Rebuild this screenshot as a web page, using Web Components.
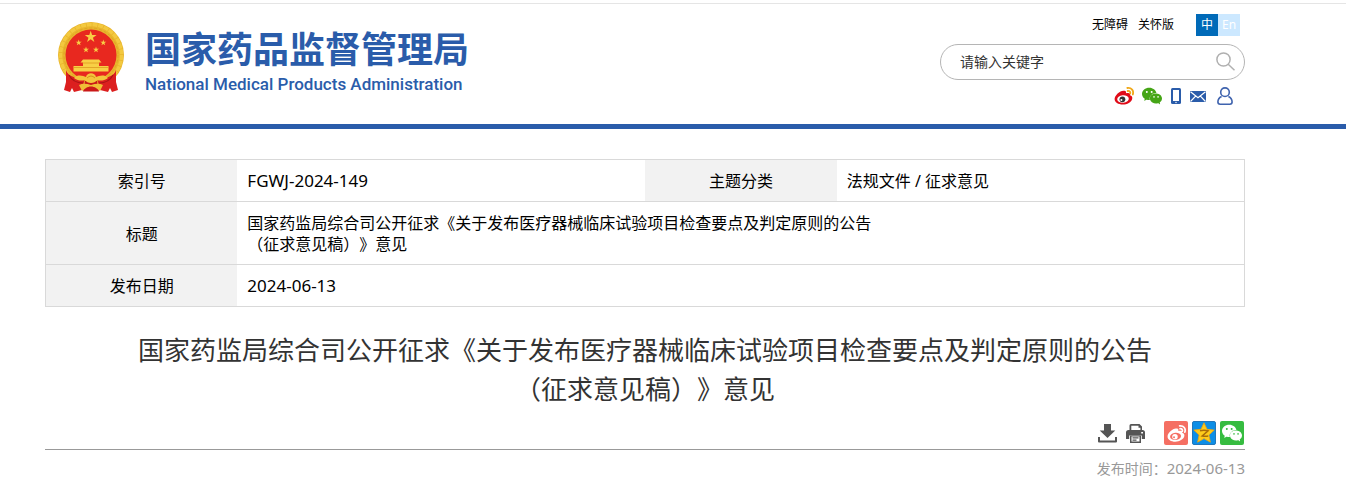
<!DOCTYPE html>
<html lang="zh-CN">
<head>
<meta charset="utf-8">
<meta name="viewport" content="width=device-width, initial-scale=1">
<title>国家药品监督管理局</title>
<style>
  body {
    margin: 0;
    background: #fff;
    color: #000;
    font-family: "Noto Sans", "Noto Sans CJK SC", sans-serif;
    text-spacing-trim: space-all;
    --brand: #2a5caa;
    --edge-start: 45px;
    --edge-end: 101px;
  }
  main { display: block; padding: 30px var(--edge-end) 20px var(--edge-start); }
  .num { font-size: 15px; }
</style>
</head>
<body>
<site-header>
  <site-logo slot="logo"></site-logo>
  <header-tools slot="tools"></header-tools>
</site-header>
<main>
  <doc-meta></doc-meta>
  <article-head>
    <span slot="title">国家药监局综合司公开征求《关于发布医疗器械临床试验项目检查要点及判定原则的公告<br>（征求意见稿）》意见</span>
    <share-bar slot="actions"></share-bar>
    <span slot="date">发布时间：<span class="num">2024-06-13</span></span>
  </article-head>
</main>

<script>
const ICONS = {
  wechat: `<path d="M8.691 2.188C3.891 2.188 0 5.476 0 9.53c0 2.212 1.17 4.203 3.002 5.55a.59.59 0 0 1 .213.665l-.39 1.48c-.019.07-.048.141-.048.213 0 .163.13.295.29.295a.326.326 0 0 0 .167-.054l1.903-1.114a.864.864 0 0 1 .717-.098 10.16 10.16 0 0 0 2.837.403c.276 0 .543-.027.811-.05-.857-2.578.157-4.972 1.932-6.446 1.703-1.415 3.882-1.98 5.853-1.838-.576-3.583-4.196-6.348-8.596-6.348zM5.785 5.991c.642 0 1.162.529 1.162 1.18a1.17 1.17 0 0 1-1.162 1.178A1.17 1.17 0 0 1 4.623 7.17c0-.651.52-1.18 1.162-1.18zm5.813 0c.642 0 1.162.529 1.162 1.18a1.17 1.17 0 0 1-1.162 1.178 1.17 1.17 0 0 1-1.162-1.178c0-.651.52-1.18 1.162-1.18zm5.34 2.867c-1.797-.052-3.746.512-5.28 1.786-1.72 1.428-2.687 3.72-1.78 6.22.942 2.453 3.666 4.229 6.884 4.229.826 0 1.622-.12 2.361-.336a.722.722 0 0 1 .598.082l1.584.926a.272.272 0 0 0 .14.047c.134 0 .24-.111.24-.247 0-.06-.023-.12-.038-.177l-.327-1.233a.582.582 0 0 1-.023-.156.49.49 0 0 1 .201-.398C23.024 18.48 24 16.82 24 14.98c0-3.21-2.931-5.837-6.656-6.088V8.89c-.135-.01-.27-.027-.407-.03zm-2.53 3.274c.535 0 .969.44.969.982a.976.976 0 0 1-.969.983.976.976 0 0 1-.969-.983c0-.542.434-.982.97-.982zm4.844 0c.535 0 .969.44.969.982a.976.976 0 0 1-.969.983.976.976 0 0 1-.969-.983c0-.542.434-.982.969-.982z"/>`,
  weibo: (body, eye, pupil, wave) => `
    <path fill="${body}" d="M9.600 4.800C11.400 4.200 12.500 5.200 11.900 7.300C14.600 6.600 16.800 7 16 9.300C17.700 9.800 18.700 11 18.200 13C17.300 16.400 13.200 18.600 8.800 18.600C4.200 18.600 .6 16.400 .6 13.100C.6 9.600 6 4.600 9.600 4.800Z"/>
    <ellipse cx="9" cy="13" rx="5.800" ry="3.800" fill="${eye}" transform="rotate(-6 9 13)"/>
    <circle cx="8.400" cy="13.300" r="2.900" fill="${pupil}"/>
    <circle cx="7.400" cy="13.900" r="1" fill="${eye}"/>
    <g fill="none" stroke="${wave}" stroke-width="1.800" stroke-linecap="round">
      <path d="M13.300 2C17.600 1.500 20 4.800 18.800 8.500"/>
      <path d="M13.700 5C15.700 4.700 16.700 6 16.200 7.500"/>
    </g>`,
  phone: `<rect x="1" y="0" width="10" height="16" rx="1.500" fill="#2a5caa"/><rect x="3" y="2" width="6" height="11" fill="#fff"/><circle cx="6" cy="14.500" r=".7" fill="#fff"/>`,
  mail: `<rect width="16" height="11" fill="#2a5caa"/><path d="M.5 .8 8 6.800 15.500 .8M.5 10.500 5.600 5.200M15.500 10.500 10.400 5.200" fill="none" stroke="#fff" stroke-width="1.200"/>`,
  user: `<g fill="none" stroke="#3f63ae" stroke-width="1.600"><circle cx="8" cy="5.200" r="4.300"/><path d="M4.600 9.500C2.300 10.500 .9 12.600 .9 15c0 1.700.8 2.200 2.300 2.200h9.600c1.500 0 2.300-.5 2.300-2.200 0-2.400-1.400-4.500-3.700-5.500"/></g>`,
  search: `<g fill="none" stroke="#b0b0b0" stroke-width="1.500"><circle cx="7.500" cy="7.500" r="6.600"/><path d="m12.200 12.200 6.300 6"/></g>`,
  download: `<path fill="#555" d="M6 0h7v6.500h4.300L9.500 14 1.700 6.500H6z"/><path fill="none" stroke="#555" stroke-width="2" stroke-linejoin="round" d="M1 13v4.500h17V13"/>`,
  print: `<path fill="#555" d="M3.500 6V1.500Q3.500 0 5 0h8.500L16 2.500V6h.5Q19 6 19 8.500V15h-3.200v-3.500H3.200V15H0V8.500Q0 6 2.500 6z"/><path fill="#fff" d="M5.300 1.800h7.200v1.900h1.900V6H5.300zM15.200 8h1.800v1.600h-1.800z"/><path fill="#555" d="M4 11.500h11V19H4z"/><path fill="#fff" d="M5.500 12.500h8v5h-8z"/><path fill="#555" d="M6.500 13.200h6v1.200h-6zM6.500 15.500h4v1.200h-4z"/>`
};

function define(name, html) {
  const template = document.createElement('template');
  template.innerHTML = html;
  customElements.define(name, class extends HTMLElement {
    constructor() {
      super();
      this.attachShadow({ mode: 'open' }).append(template.content.cloneNode(true));
    }
  });
}

define('site-header', `
  <style>
    :host { display: block; padding-top: 3px; border-bottom: 5px solid var(--brand); }
    header {
      display: flex; justify-content: space-between; align-items: flex-start; gap: 24px;
      border-top: 1px solid #e5e5e5;
      padding: 10px var(--edge-end) 17px var(--edge-start);
    }
  </style>
  <header><slot name="logo"></slot><slot name="tools"></slot></header>`);

const star = (x, y, r) => `<polygon transform="translate(${x} ${y}) scale(${r})" points="0,-1 .225,-.309 .951,-.309 .363,.118 .588,.809 0,.382 -.588,.809 -.363,.118 -.951,-.309 -.225,-.309"/>`;

define('site-logo', `
  <style>
    :host { display: block; color: var(--brand); padding: 7px 0 0 12px; }
    a { display: flex; align-items: flex-start; gap: 20px; color: inherit; text-decoration: none; }
    svg { display: block; width: 68px; height: 72px; flex: none; }
    .names { display: flex; flex-direction: column; padding-top: 6px; white-space: nowrap; }
    .zh { font: 700 36px/40px "Noto Sans CJK SC", sans-serif; }
    .en { font: 500 17px/24px Roboto, sans-serif; padding-top: 5px; }
  </style>
  <a href="#">
    <svg viewBox="0 0 68 72" aria-hidden="true">
      <circle cx="34" cy="34" r="33" fill="#e9b52c"/>
      <circle cx="34" cy="34" r="30.500" fill="none" stroke="#f3c93f" stroke-width="3.500" stroke-dasharray="5 .8"/>
      <circle cx="34" cy="34" r="27" fill="none" stroke="#dfa526" stroke-width="1" stroke-dasharray="3 2"/>
      <circle cx="34" cy="34" r="25.500" fill="#e8281f"/>
      <g fill="#f8cf45">
        ${star(33.7, 16, 6.2)}${star(21.7, 21.7, 3.2)}${star(46.3, 21.7, 3.2)}${star(29, 28.7, 3.2)}${star(39, 28.7, 3.2)}
        <path d="M26 38.500h16l2.500 3H42v3.500h9.500v5.500h-35V45H26v-3.500h-2.500z"/>
      </g>
      <path d="M25.500 42h17M17 46.500h34" stroke="#dc9a20" stroke-width=".8"/>
      <path d="M9 49c2 7 12 9 19 8l-3 12-8 2-2-4-2 4-6-2 2-8z" fill="#dc1f1f"/>
      <path d="M59 49c-2 7-12 9-19 8l3 12 8 2 2-4 2 4 6-2-2-8z" fill="#dc1f1f"/>
      <path d="M28 60h12l2 10.500H26z" fill="#ca1818"/>
      <path d="M12 54c3 6 8 8 14 8M56 54c-3 6-8 8-14 8" fill="none" stroke="#a91515" stroke-width="1.200"/>
      <path d="M17 57c4-4 9-2 12-1 1-5 9-5 10 0 3-1 8-3 12 1-4 3-8 3-11 2-2 4-10 4-12 0-3 1-7 1-11-2z" fill="#f4c53c"/>
      <path d="M30 57q4-4 8 0" fill="none" stroke="#d4941c"/>
      <path d="M22 64c4-2 8-1 12 0 4-1 8-2 12 0l-3 6-4-3c-3-2-7-2-10 0l-4 3z" fill="#f0bd36"/>
    </svg>
    <span class="names"><span class="zh">国家药品监督管理局</span><span class="en">National Medical Products Administration</span></span>
  </a>`);

define('header-tools', `
  <style>
    :host { display: block; width: 305px; flex: none; }
    .top { display: flex; justify-content: flex-end; align-items: center; gap: 10px; padding-right: 5px; font-size: 12px; line-height: 22px; }
    a { color: #000; text-decoration: none; }
    .lang { display: flex; padding-left: 12px; }
    .lang a { width: 22px; text-align: center; color: #fff; background: #cce8ff; }
    .lang a.on { background: #006ab8; }
    .social { display: flex; justify-content: flex-end; align-items: center; gap: 8px; padding: 5px 12px 0 0; height: 22px; }
    .social svg { display: block; }
    .social .user { padding-left: 3px; }
  </style>
  <nav class="top">
    <a href="#">无障碍</a><a href="#">关怀版</a>
    <span class="lang"><a class="on" href="#">中</a><a href="#">En</a></span>
  </nav>
  <search-box></search-box>
  <nav class="social">
    <a href="#" aria-label="微博"><svg width="20" height="20" viewBox="0 0 20 20">${ICONS.weibo('#e00b18', '#fff', '#333', '#f0a818')}</svg></a>
    <a href="#" aria-label="微信"><svg width="20" height="20" viewBox="0 0 24 24" fill="#45a516">${ICONS.wechat}</svg></a>
    <a href="#" aria-label="手机版"><svg width="12" height="16" viewBox="0 0 12 16">${ICONS.phone}</svg></a>
    <a href="#" aria-label="邮箱"><svg width="16" height="11" viewBox="0 0 16 11">${ICONS.mail}</svg></a>
    <a class="user" href="#" aria-label="登录"><svg width="16" height="18" viewBox="0 0 16 18">${ICONS.user}</svg></a>
  </nav>`);

define('search-box', `
  <style>
    :host { display: block; padding-top: 8px; }
    form { display: flex; align-items: center; height: 36px; box-sizing: border-box; border: 1px solid #b5b5b5; border-radius: 18px; padding: 0 8px 0 19px; }
    input { flex: 1; min-width: 0; border: 0; outline: 0; padding: 0; background: none; font: inherit; font-size: 14px; line-height: 20px; color: #333; }
    input::placeholder { color: #333; opacity: 1; }
    button { border: 0; padding: 0; background: none; }
    svg { display: block; }
  </style>
  <form role="search">
    <input type="text" aria-label="搜索" placeholder="请输入关键字">
    <button type="button" aria-label="搜索"><svg width="20" height="20" viewBox="0 0 20 20">${ICONS.search}</svg></button>
  </form>`);

define('doc-meta', `
  <style>
    :host { display: block; }
    table { width: 100%; table-layout: fixed; border-collapse: collapse; border: 1px solid #d9d9d9; font-size: 16px; line-height: 21px; }
    tr { border-top: 1px solid #d9d9d9; }
    th, td { padding: 11px 10px 9px; font-weight: 400; }
    th { background: #f2f2f2; text-align: center; }
    td { text-align: left; }
    .num { padding: 10px; font-size: 17px; }
    .label { width: 16%; }
    .value { width: 34%; }
  </style>
  <table>
    <colgroup><col class="label"><col class="value"><col class="label"><col class="value"></colgroup>
    <tr><th scope="row">索引号</th><td class="num">FGWJ-2024-149</td><th scope="row">主题分类</th><td>法规文件 / 征求意见</td></tr>
    <tr><th scope="row">标题</th><td colspan="3">国家药监局综合司公开征求《关于发布医疗器械临床试验项目检查要点及判定原则的公告<br>（征求意见稿）》意见</td></tr>
    <tr><th scope="row">发布日期</th><td class="num" colspan="3">2024-06-13</td></tr>
  </table>`);

define('article-head', `
  <style>
    :host { display: block; padding-top: 24px; }
    h1 { margin: 0; font-size: 26px; line-height: 39px; font-weight: 400; color: #333; text-align: center; }
    .actions { display: flex; justify-content: flex-end; padding: 12px 1px 4px 0; border-bottom: 1px solid #999; }
    .date { margin: 0; padding-top: 7px; font-size: 14px; line-height: 22px; color: #999; text-align: right; }
  </style>
  <h1><slot name="title"></slot></h1>
  <div class="actions"><slot name="actions"></slot></div>
  <p class="date"><slot name="date"></slot></p>`);

define('share-bar', `
  <style>
    :host { display: flex; align-items: center; gap: 19px; }
    .group { display: flex; align-items: center; gap: 9px; }
    .share { gap: 4px; }
    button { border: 0; padding: 0; background: none; }
    svg { display: block; }
    a { display: grid; place-items: center; width: 24px; height: 24px; border-radius: 2px; box-sizing: border-box; }
    .weibo { background: #f56f63; }
    .qzone { background: #0d8ee6; border: 1px solid #2277bb; }
    .wechat { background: #36bc40; }
  </style>
  <span class="group">
    <button type="button" aria-label="下载"><svg width="19" height="19" viewBox="0 0 19 19">${ICONS.download}</svg></button>
    <button type="button" aria-label="打印"><svg width="19" height="19" viewBox="0 0 19 19">${ICONS.print}</svg></button>
  </span>
  <span class="group share">
    <a class="weibo" href="#" aria-label="分享到微博"><svg width="19" height="19" viewBox="0 0 20 20">${ICONS.weibo('#fff', '#f56f63', '#fff', '#fff')}</svg></a>
    <a class="qzone" href="#" aria-label="分享到QQ空间"><svg width="22" height="22" viewBox="0 0 22 22"><path d="m11 .8 3 6.500 7.200.8-5.300 4.900 1.500 7.200L11 16.600l-6.400 3.600L6.100 13 .8 8.100 8 7.300z" fill="#fdcb1b" stroke="#f2a30b" stroke-width=".8"/><path d="M7 8.800q4-1 8 0l-5.800 5.100q3.400.5 6 0" fill="none" stroke="#a96c08" stroke-width="1.500"/></svg></a>
    <a class="wechat" href="#" aria-label="分享到微信"><svg width="20" height="20" viewBox="0 0 24 24" fill="#fff">${ICONS.wechat}</svg></a>
  </span>`);
</script>
</body>
</html>
